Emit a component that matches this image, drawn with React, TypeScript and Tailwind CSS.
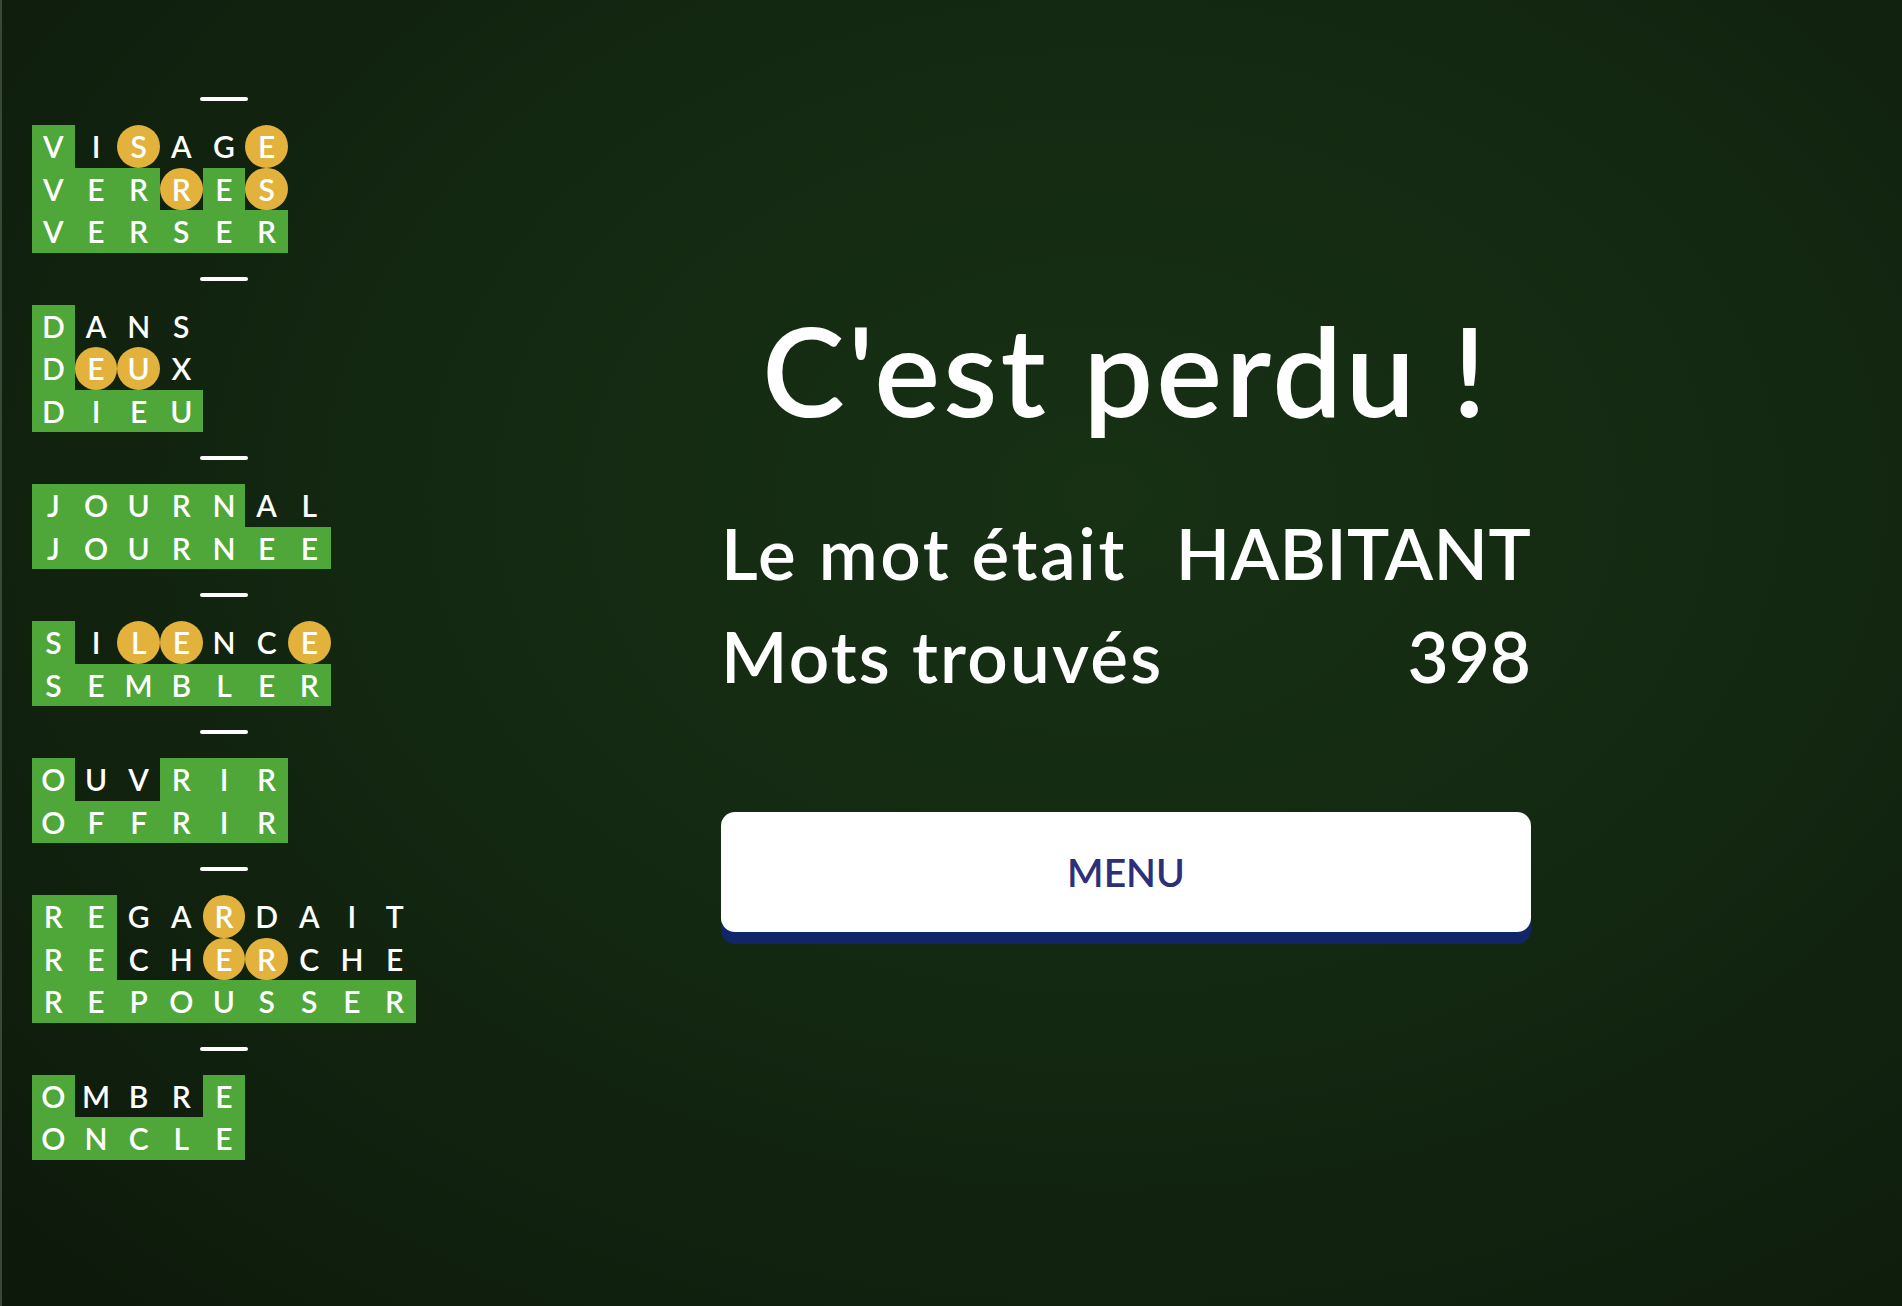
import React from "react";

type Cell = { ch: string; s: "g" | "y" | "." };

const groups: string[][][] = [
  [
    ["VISAGE", "g.y..y"],
    ["VERRES", "gggygy"],
    ["VERSER", "gggggg"],
  ],
  [
    ["DANS", "g..."],
    ["DEUX", "gyy."],
    ["DIEU", "gggg"],
  ],
  [
    ["JOURNAL", "ggggg.."],
    ["JOURNEE", "ggggggg"],
  ],
  [
    ["SILENCE", "g.yy..y"],
    ["SEMBLER", "ggggggg"],
  ],
  [
    ["OUVRIR", "g..ggg"],
    ["OFFRIR", "gggggg"],
  ],
  [
    ["REGARDAIT", "gg..y...."],
    ["RECHERCHE", "gg..yy..."],
    ["REPOUSSER", "ggggggggg"],
  ],
  [
    ["OMBRE", "g...g"],
    ["ONCLE", "ggggg"],
  ],
];

function toCells(word: string, states: string): Cell[] {
  return word.split("").map((ch, i) => ({ ch, s: states[i] as Cell["s"] }));
}

function LetterCell({ cell }: { cell: Cell }) {
  const base =
    "w-[42.67px] h-[42.5px] flex items-center justify-center text-white text-[30px] leading-none font-semibold";
  if (cell.s === "g") {
    return <div className={base + " bg-[#4ea738]"}>{cell.ch}</div>;
  }
  if (cell.s === "y") {
    return <div className={base + " bg-[#e2b23d] rounded-full"}>{cell.ch}</div>;
  }
  return <div className={base}>{cell.ch}</div>;
}

export default function App() {
  return (
    <div
      className="w-[1902px] h-[1306px] overflow-hidden flex border-l-2 border-[#3a4838] bg-[radial-gradient(ellipse_at_58%_38%,#173115_0%,#132811_45%,#0d190b_100%)]"
      style={{ fontFamily: "Lato, 'Noto Sans', sans-serif" }}
    >
      <div className="w-[446px] shrink-0 flex flex-col pt-[97px]">
        {groups.map((g, gi) => (
          <div key={gi} className="flex flex-col">
            <div className="h-1 w-12 rounded-full bg-white ml-[198px]" />
            <div className="my-6 pl-[30px] flex flex-col">
              {g.map(([w, s], ri) => (
                <div key={ri} className="flex">
                  {toCells(w, s).map((c, ci) => (
                    <LetterCell key={ci} cell={c} />
                  ))}
                </div>
              ))}
            </div>
          </div>
        ))}
      </div>
      <div className="flex-1 flex flex-col items-center pt-[307px] pr-[98px]">
        <div className="w-[810px] flex flex-col items-stretch text-white">
          <h1 className="text-[124px] leading-none font-semibold text-center tracking-[3.2px]">
            C'est perdu&nbsp;!
          </h1>
          <div className="mt-[86px] flex justify-between text-[71px] leading-none font-semibold">
            <span className="tracking-[2.6px]">Le mot était</span>
            <span className="tracking-[0.3px]">HABITANT</span>
          </div>
          <div className="mt-[32px] flex justify-between text-[71px] leading-none font-semibold">
            <span className="tracking-[2.2px]">Mots trouvés</span>
            <span>398</span>
          </div>
          <button className="mt-[121px] h-[120px] w-full rounded-[14px] bg-white shadow-[0_12px_0_#102667] flex items-center justify-center text-[39px] leading-none font-semibold text-[#2d2f7b]">
            MENU
          </button>
        </div>
      </div>
    </div>
  );
}
